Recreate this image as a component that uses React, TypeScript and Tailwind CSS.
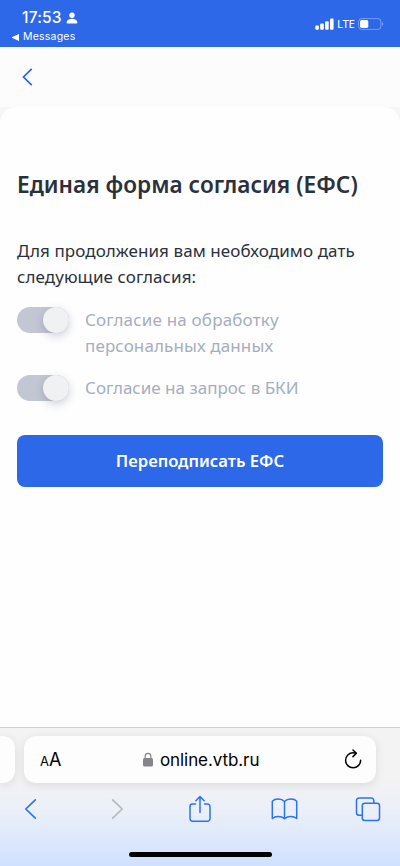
import React from 'react';

const consents = [
  {
    id: 'personal',
    lines: [
      { text: 'Согласие на обработку', tracking: 'tracking-[0.18px]' },
      { text: 'персональных данных', tracking: 'tracking-[0.11px]' },
    ],
  },
  {
    id: 'bki',
    lines: [{ text: 'Согласие на запрос в БКИ', tracking: 'tracking-normal' }],
  },
];

const StatusBar = () => (
  <header className="flex h-[47px] shrink-0 justify-between bg-[#2d68e8] pl-3 pr-4 font-['Inter',sans-serif] text-white">
    <div className="pt-[9px]">
      <div className="flex h-[18px] items-center gap-1 pl-[10px]">
        <span className="text-[15.5px] font-medium leading-[18px] tracking-[0.2px]">17:53</span>
        <svg width="12" height="12" viewBox="0 0 12 12" fill="currentColor">
          <circle cx="6" cy="3.2" r="2.7" />
          <path d="M.6 10.200C.9 8 3.100 6.800 6 6.800s5.100 1.200 5.400 3.400c.1.800-.3 1.200-1 1.200H1.600c-.7 0-1.100-.4-1-1.200Z" />
        </svg>
      </div>
      <div className="mt-[3px] flex h-[14px] items-center gap-1">
        <svg width="7" height="7" viewBox="0 0 7 7" fill="currentColor">
          <path d="M7 0v7L.3 3.900a.4.400 0 0 1 0-.8L7 0Z" />
        </svg>
        <span className="text-[10.5px] leading-[14px] tracking-[0.22px]">Messages</span>
      </div>
    </div>
    <div className="mt-[17px] flex h-[14px] items-center self-start">
      <svg width="19" height="12" viewBox="0 0 19 12" fill="currentColor">
        <rect x="0.300" y="7.500" width="3.600" height="4.200" rx="1" />
        <rect x="5.200" y="5.500" width="3.600" height="6.200" rx="1" />
        <rect x="10.100" y="3.200" width="3.600" height="8.500" rx="1" />
        <rect x="15" y="0.500" width="3.600" height="11.200" rx="1" />
      </svg>
      <span className="ml-[3px] w-[21px] font-['Noto_Sans',sans-serif] text-[11.5px] leading-[14px] tracking-[-0.3px]">LTE</span>
      <svg width="26" height="12" viewBox="0 0 26 12" fill="none">
        <rect x="0.600" y="0.600" width="22.300" height="10.800" rx="3" stroke="white" strokeOpacity="0.350" />
        <rect x="2" y="2" width="8.300" height="8" rx="1.700" fill="white" />
        <path d="M24.200 4.200c1.500.6 1.500 3 0 3.600V4.200Z" fill="white" fillOpacity="0.450" />
      </svg>
    </div>
  </header>
);

const Toggle = () => (
  <span className="flex h-[26px] w-[52px] shrink-0 justify-end rounded-full bg-[#c3c7d3]">
    <span className="size-[26px] rounded-full bg-[#f0f1f3] shadow-[0_3px_8px_rgba(60,70,110,0.250)]" />
  </span>
);

const BrowserBar = () => (
  <footer className="flex h-[139px] shrink-0 flex-col overflow-hidden border-t border-[#cfd0d1] bg-linear-to-b from-[#f3f3f3] from-35% via-[#eaeff8] via-62% to-[#cfe1ff]">
    <div className="mt-2 flex h-[47px] shrink-0 gap-[9px]">
      <div className="w-[15px] rounded-r-[12px] bg-[#fdfdfd] shadow-[0_2px_10px_rgba(0,0,0,0.100)]" />
      <div className="flex w-[352px] items-center rounded-[12px] bg-[#fdfdfd] pl-4 pr-[14px] font-['Inter',sans-serif] text-black shadow-[0_2px_10px_rgba(0,0,0,0.100)]">
        <span className="flex w-[103px] items-baseline pt-px leading-6">
          <span className="text-[13px]">A</span>
          <span className="text-[18px]">A</span>
        </span>
        <svg width="10" height="15" viewBox="0 0 10 15" className="shrink-0">
          <path d="M2.200 7V4.100a2.800 2.800 0 0 1 5.600 0V7" fill="none" stroke="#858589" strokeWidth="1.200" />
          <rect y="6" width="10" height="8.500" rx="1.500" fill="#858589" />
        </svg>
        <span className="ml-[7px] flex-1 text-[17px] leading-6 tracking-[-0.080px]">online.vtb.ru</span>
        <svg width="18" height="21" viewBox="0 0 18 21" fill="none" stroke="currentColor" strokeWidth="1.500" strokeLinecap="round" strokeLinejoin="round">
          <path d="M12 4.200C11.100 3.900 10.100 3.800 9.100 3.800A7.500 7.500 0 1 0 16.600 11.300" />
          <path d="M9 1l3.300 3.300L9 7.600" />
        </svg>
      </div>
    </div>
    <nav className="-mx-[10px] mt-3 grid h-7 shrink-0 grid-cols-5 place-items-center text-[#2a74f0]">
      <svg width="13" height="22" viewBox="0 0 13 22" fill="none" stroke="currentColor" strokeWidth="1.700" strokeLinecap="round" strokeLinejoin="round" className="mr-[3px]">
        <path d="M11.300 1.800 1.800 11l9.500 9.200" />
      </svg>
      <svg width="13" height="22" viewBox="0 0 13 22" fill="none" stroke="#b7b9be" strokeWidth="1.700" strokeLinecap="round" strokeLinejoin="round" className="ml-[3px]">
        <path d="m1.700 1.800 9.500 9.200-9.500 9.200" />
      </svg>
      <svg width="22" height="28" viewBox="0 0 22 28" fill="none" stroke="currentColor" strokeWidth="1.500" strokeLinecap="round" strokeLinejoin="round">
        <path d="M6.500 9H3.500A2.500 2.500 0 0 0 1 11.500v12.300a2.500 2.500 0 0 0 2.500 2.500h15a2.500 2.500 0 0 0 2.500-2.500V11.500A2.500 2.500 0 0 0 18.500 9h-3" />
        <path d="M11 17.500V1.700M6.800 5.700 11 1.600l4.200 4.100" />
      </svg>
      <svg width="27" height="22" viewBox="0 0 27 22" fill="none" stroke="currentColor" strokeWidth="1.500" strokeLinecap="round" strokeLinejoin="round">
        <path d="M13.500 3.500C11.700 1.500 9.500 1 7.200 1 4.700 1 2.500 1.800 1.300 3.200v17.300c1.700-1.500 3.700-2 5.900-2 2.500 0 4.500.7 6.300 2.200 1.800-1.500 3.800-2.200 6.300-2.200 2.200 0 4.200.5 5.900 2V3.200C24.500 1.800 22.300 1 19.800 1c-2.300 0-4.500.5-6.300 2.500Zm0 0v17" />
      </svg>
      <svg width="26" height="25" viewBox="0 0 26 25" fill="none" stroke="currentColor" strokeWidth="1.500">
        <path d="M7.300 18.300H4A2.500 2.500 0 0 1 1.500 15.800V3.500A2.500 2.500 0 0 1 4 1h12.300a2.500 2.500 0 0 1 2.500 2.500v2.800" />
        <rect x="7.300" y="6.300" width="17.200" height="17.200" rx="2.500" />
      </svg>
    </nav>
    <div className="mt-auto mb-[9px] h-[5px] w-[143px] shrink-0 self-center rounded-full bg-black" />
  </footer>
);

const App = () => {
  return (
    <div className="flex h-[866px] w-[400px] flex-col overflow-hidden bg-[#f5f6f6] font-['Noto_Sans',sans-serif] text-[#2b303d]">
      <StatusBar />

      <div className="flex h-[60px] shrink-0 items-center bg-[#fcfcfc] pl-[22px]">
        <button type="button" aria-label="Назад" className="text-[#2a65e5]">
          <svg width="11" height="18" viewBox="0 0 11 18" fill="none" stroke="currentColor" strokeWidth="1.700">
            <path d="M9.700.8 1.500 9l8.200 8.200" />
          </svg>
        </button>
      </div>

      <main className="flex-1 rounded-t-[16px] bg-[#fefefe] px-[17px] pt-[62px]">
        <h1 className="whitespace-nowrap text-[22.6px] font-semibold leading-8 tracking-[0.02px]">Единая форма согласия (ЕФС)</h1>

        <p className="mt-[37px] whitespace-nowrap text-[17px] leading-[26px] tracking-[0.080px]">
          Для продолжения вам необходимо дать
          <br />
          следующие согласия:
        </p>

        <div className="mt-[17px] flex flex-col gap-4">
          {consents.map((consent) => (
            <div key={consent.id} className="flex gap-4">
              <Toggle />
              <p className="whitespace-nowrap text-[17px] leading-[26px] text-[#a6aebd]">
                {consent.lines.map((line) => (
                  <span key={line.text} className={`block ${line.tracking}`}>{line.text}</span>
                ))}
              </p>
            </div>
          ))}
        </div>

        <button type="button" className="mt-[34px] h-[52px] w-full rounded-lg bg-[#2d68e8] text-[16.6px] font-semibold text-white">
          Переподписать ЕФС
        </button>
      </main>

      <BrowserBar />
    </div>
  );
};

export default App;
